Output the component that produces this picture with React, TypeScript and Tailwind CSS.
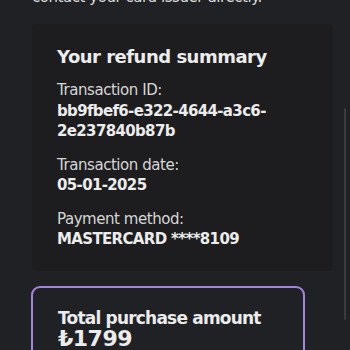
import React from "react";

export default function App() {
  return (
    <div
      className="relative w-[350px] h-[350px] overflow-hidden bg-[#202124] text-[#e6e6e6]"
      style={{ fontFamily: '"DejaVu Sans", sans-serif' }}
    >
      <div className="flex flex-col pl-[32px] pr-[17px] mt-[-13px]">
        <p className="text-[15px] leading-[20px] tracking-[-0.45px] text-[#dcdcdc]">contact your card issuer directly.</p>
        <div className="mt-[17px] bg-[#1d1d1f] rounded-[4px] pl-[25px] pr-[10px] pt-[20px] pb-[21px] flex flex-col">
          <h2 className="text-[18px] leading-[26px] font-bold tracking-[-0.5px] text-[#ececec]">Your refund summary</h2>
          <div className="mt-[10px] flex flex-col text-[15px] leading-[20.5px]">
            <span className="text-[#d6d6d6] tracking-[-0.45px]">Transaction ID:</span>
            <span className="font-bold text-[#ececec] tracking-[-0.65px]">bb9fbef6-e322-4644-a3c6-<br />2e237840b87b</span>
          </div>
          <div className="mt-[13px] flex flex-col text-[15px] leading-[20.5px]">
            <span className="text-[#d6d6d6] tracking-[-0.45px]">Transaction date:</span>
            <span className="font-bold text-[#ececec] tracking-[-0.65px]">05-01-2025</span>
          </div>
          <div className="mt-[13px] flex flex-col text-[15px] leading-[20.5px]">
            <span className="text-[#d6d6d6] tracking-[-0.45px]">Payment method:</span>
            <span className="font-bold text-[#ececec] tracking-[-0.65px]">MASTERCARD ****8109</span>
          </div>
        </div>
        <div className="mt-[15px] mr-[28px] ml-[-1px] border-2 border-[#a584dc] rounded-[9px] pl-[25px] pt-[21px] pb-[20px] flex flex-col">
          <span className="text-[17px] leading-[19px] font-bold tracking-[-0.8px] text-[#ececec]">Total purchase amount</span>
          <span className="text-[22px] leading-[22px] font-bold tracking-[-0.5px] text-[#ececec]">₺1799</span>
        </div>
      </div>
      <div className="absolute right-[4px] top-[108px] w-[2px] h-[212px] bg-[#3a3b3f] rounded-full" />
    </div>
  );
}
